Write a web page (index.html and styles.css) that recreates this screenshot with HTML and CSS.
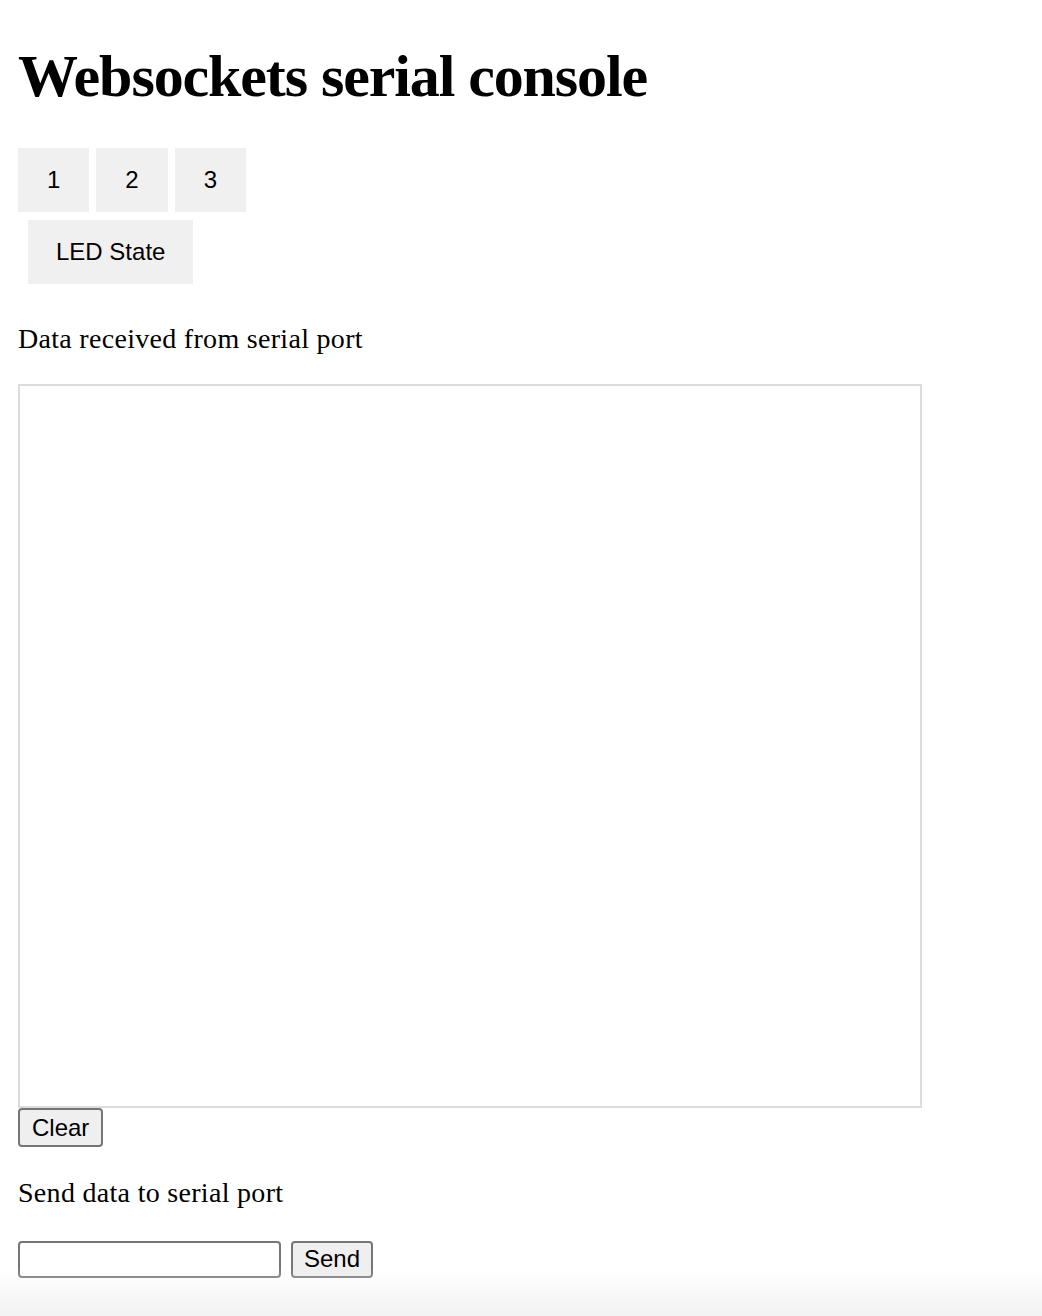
FILE: index.html
```html
<!DOCTYPE html>
<html lang="en">
<head>
<meta charset="utf-8">
<title>Websockets serial console</title>
<link rel="stylesheet" href="styles.css">
</head>
<body>
<h1 class="title">Websockets serial console</h1>
<div class="btn-row">
  <button class="tab-btn">1</button>
  <button class="tab-btn">2</button>
  <button class="tab-btn">3</button>
</div>
<div class="btn-row led-row">
  <button class="tab-btn led-btn">LED State</button>
</div>
<p class="label label-recv">Data received from serial port</p>
<textarea class="console" readonly></textarea>
<div class="clear-row">
  <button class="sys-btn clear-btn">Clear</button>
</div>
<p class="label label-send">Send data to serial port</p>
<div class="send-row">
  <input class="send-input" type="text">
  <button class="sys-btn send-btn">Send</button>
</div>
<div class="bottom-fade"></div>
</body>
</html>
```

FILE: styles.css
```css
html {
  background: #ffffff;
}
body {
  margin: 0;
  padding: 0 18px;
  font-family: "Liberation Serif", "Times New Roman", serif;
  color: #000;
  min-height: 1316px;
  box-sizing: border-box;
}
.title {
  margin: 39px 0 0 0;
  font-size: 60px;
  line-height: 74px;
  font-weight: bold;
  letter-spacing: -1.1px;
}
.btn-row {
  display: flex;
  gap: 7px;
  margin-top: 35px;
}
.led-row {
  margin-top: 8px;
  padding-left: 10px;
}
.tab-btn {
  font-family: "Liberation Sans", Arial, sans-serif;
  font-size: 24px;
  line-height: 28px;
  padding: 18px 29px;
  border: none;
  background: #f0f0f0;
  color: #000;
  margin: 0;
}
.led-btn {
  padding: 18px 28px;
}
.label {
  font-size: 28px;
  line-height: 32px;
  margin: 0;
  letter-spacing: 0.3px;
}
.label-recv {
  margin-top: 39px;
}
.console {
  display: block;
  margin: 29px 0 0 0;
  width: 904px;
  height: 724px;
  box-sizing: border-box;
  border: 2px solid #dcdcdc;
  resize: none;
  outline: none;
  padding: 0;
  background: #fff;
}
.clear-row {
  display: flex;
}
.sys-btn {
  font-family: "Liberation Sans", Arial, sans-serif;
  font-size: 24px;
  line-height: 28px;
  color: #000;
  background: #efefef;
  border: 2px solid #767676;
  border-radius: 4px;
  margin: 0;
}
.clear-btn {
  padding: 3.5px 12px;
}
.label-send {
  margin-top: 30px;
}
.send-row {
  display: flex;
  align-items: stretch;
  gap: 10px;
  margin-top: 32px;
}
.send-input {
  width: 263px;
  height: 37px;
  box-sizing: border-box;
  border: 2px solid #767676;
  border-radius: 4px;
  margin: 0;
  padding: 0 4px;
  font-size: 24px;
  background: #fff;
}
.send-btn {
  height: 37px;
  box-sizing: border-box;
  padding: 0 11px 2px;
}
.bottom-fade {
  position: fixed;
  left: 0;
  right: 0;
  bottom: 0;
  height: 48px;
  background: linear-gradient(to bottom, rgba(242, 242, 242, 0), rgba(242, 242, 242, 1));
  pointer-events: none;
}
```
